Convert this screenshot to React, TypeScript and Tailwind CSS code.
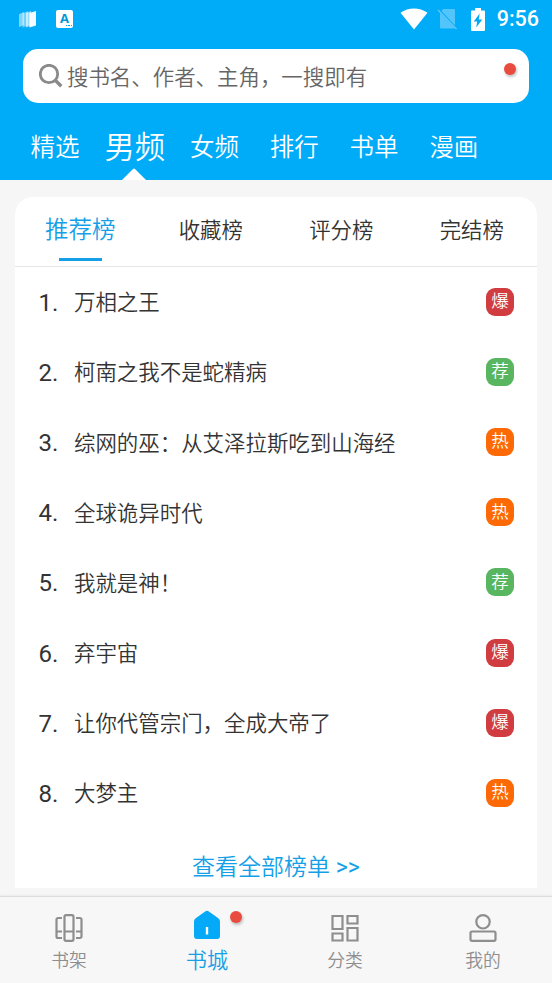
import React, { useState } from 'react';

type BadgeKind = '爆' | '荐' | '热';

interface Book {
  title: string;
  badge: BadgeKind;
}

const channels = ['精选', '男频', '女频', '排行', '书单', '漫画'];

const rankings = ['推荐榜', '收藏榜', '评分榜', '完结榜'];

const books: Book[] = [
  { title: '万相之王', badge: '爆' },
  { title: '柯南之我不是蛇精病', badge: '荐' },
  { title: '综网的巫：从艾泽拉斯吃到山海经', badge: '热' },
  { title: '全球诡异时代', badge: '热' },
  { title: '我就是神！', badge: '荐' },
  { title: '弃宇宙', badge: '爆' },
  { title: '让你代管宗门，全成大帝了', badge: '爆' },
  { title: '大梦主', badge: '热' },
];

const badgeColors: Record<BadgeKind, string> = {
  爆: 'bg-[#d03c3f]',
  荐: 'bg-[#58b560]',
  热: 'bg-[#fd6a05]',
};

const StatusBar: React.FC = () => (
  <div className="flex h-[38px] items-center justify-between pl-[19px] pr-[13px]">
    <div className="flex items-center gap-5">
      <svg width="17" height="18" viewBox="0 0 17 18" fill="#fff">
        <path d="M0 4.200 5 2v13L0 17z" opacity=".5" />
        <path d="M3.500 3.200 9 1.200v14.300l-5.500 2z" opacity=".45" />
        <path d="M7 3 12 1v14.500l-5 2z" opacity=".6" />
        <path d="M10.500 3 17 1v14.500l-6.500 2z" opacity=".95" />
      </svg>
      <div className="relative flex h-[18px] w-[17px] justify-center rounded-[2px] bg-white">
        <span className="font-['Open_Sans',sans-serif] text-[13px] font-bold leading-[17px] text-[#0795d8]">A</span>
        <span className="absolute bottom-[2px] right-[1px] flex gap-px">
          <i className="h-[1.500px] w-[1.500px] bg-[#00a9f7]" />
          <i className="h-[1.500px] w-[1.500px] bg-[#00a9f7]" />
          <i className="h-[1.500px] w-[1.500px] bg-[#00a9f7]" />
        </span>
      </div>
    </div>
    <div className="flex items-center">
      <svg width="28" height="22" viewBox="0 0 28 22" fill="#fff">
        <path d="M.5 4.800C8.300-1 19.700-1 27.500 4.800L14 21.500z" />
      </svg>
      <svg className="ml-[9px]" width="21" height="22" viewBox="0 0 21 22">
        <path d="M6 1H17a1 1 0 0 1 1 1v15.500L4.500 3zM3 5 18 20.500H4a1 1 0 0 1-1-1z" fill="#fff" opacity=".32" />
        <path d="m1 2 18.500 19" stroke="#8cd6f8" strokeWidth="1.200" opacity=".7" />
      </svg>
      <svg className="ml-[13px]" width="14" height="23" viewBox="0 0 14 23">
        <path d="M4 0h6v2.500h3a1 1 0 0 1 1 1V22a1 1 0 0 1-1 1H1a1 1 0 0 1-1-1V3.500a1 1 0 0 1 1-1h3z" fill="#fff" />
        <path d="M8.700 5.500 2.700 13.500h3.500L5.200 19.500 11.300 11.500H7.800z" fill="#00a9f7" />
      </svg>
      <span className="ml-3 text-[21.500px] font-medium leading-none text-white">9:56</span>
    </div>
  </div>
);

const SearchBox: React.FC = () => (
  <div className="mx-[23px] mt-[11px] flex h-[54px] items-start justify-between rounded-[15px] bg-white pl-4 pr-[13px]">
    <div className="flex h-full items-center gap-1">
      <svg width="24" height="24" viewBox="0 0 24 24" fill="none" stroke="#8a8a8a">
        <circle cx="10" cy="10" r="8.700" strokeWidth="2.800" />
        <path d="m16.500 16.500 5.800 5.800" strokeWidth="3.400" />
      </svg>
      <span className="pt-[3px] text-[21.440px] leading-none text-[#666]">搜书名、作者、主角，一搜即有</span>
    </div>
    <span className="mt-[14px] h-3 w-3 rounded-full bg-[#e94b3f] shadow-[1px_2px_3px_rgba(0,0,0,0.25)]" />
  </div>
);

const BookshelfIcon = () => (
  <svg width="28" height="28" viewBox="0 0 28 28" fill="none" stroke="#8e8e8e" strokeWidth="2.200">
    <rect x="9.500" y="1.200" width="9" height="25.600" rx="1.500" />
    <path d="M9.500 17.500h9M7 4H3a1.500 1.500 0 0 0-1.500 1.500v17A1.500 1.500 0 0 0 3 24h4M1.500 17.500H7M21 4h4a1.500 1.500 0 0 1 1.500 1.500v17A1.500 1.500 0 0 1 25 24h-4M21 17.500h5.500" />
  </svg>
);

const StoreIcon = () => (
  <svg width="28" height="32" viewBox="0 0 28 32">
    <path d="M12.500 1.200q1.500-1 3 0L25 8q2 1.400 2 3.500V26a3 3 0 0 1-3 3H4a3 3 0 0 1-3-3V11.500Q1 9.400 3 8z" fill="#04a9f8" />
    <path d="M14 17v7.500" stroke="#fff" strokeWidth="2.400" />
  </svg>
);

const CategoryIcon = () => (
  <svg width="28" height="28" viewBox="0 0 28 28" fill="none" stroke="#8e8e8e" strokeWidth="2.200">
    <path d="M1.500 2H11.500v13H1.500zM16.500 2h10v7.500h-10zM1.500 19.500H11.500V26.500H1.500zM16.500 14h10v12.500h-10z" />
  </svg>
);

const ProfileIcon = () => (
  <svg width="28" height="28" viewBox="0 0 28 28" fill="none" stroke="#8e8e8e" strokeWidth="2.200">
    <circle cx="14" cy="7.800" r="6.700" />
    <rect x="1.500" y="17.500" width="25" height="9.300" rx="1.500" />
  </svg>
);

const navItems = [
  { label: '书架', Icon: BookshelfIcon },
  { label: '书城', Icon: StoreIcon, dot: true },
  { label: '分类', Icon: CategoryIcon },
  { label: '我的', Icon: ProfileIcon },
];

const App: React.FC = () => {
  const [channel, setChannel] = useState('男频');
  const [ranking, setRanking] = useState('推荐榜');
  const [page, setPage] = useState('书城');

  return (
    <div className="flex h-[983px] w-[552px] flex-col overflow-hidden bg-[#f6f6f6] font-[Roboto,'Noto_Sans_CJK_SC',sans-serif] font-[350]">
      <header className="h-[180px] shrink-0 bg-[#00abf8]">
        <StatusBar />
        <SearchBox />
        <nav className="flex h-[77px] pl-[15px]">
          {channels.map((name) => (
            <button
              key={name}
              onClick={() => setChannel(name)}
              className={`relative flex w-[79.800px] items-center justify-center whitespace-nowrap pt-[13px] leading-none text-white ${
                channel === name ? 'text-[30.300px]' : 'text-[24.500px]'
              }`}
            >
              {name}
              {channel === name && (
                <svg className="absolute bottom-0 left-[27px]" width="24" height="12" viewBox="0 0 24 12">
                  <path d="M0 12 11 1q1-1 2 0l11 11z" fill="#fff" />
                </svg>
              )}
            </button>
          ))}
        </nav>
      </header>

      <main className="mx-[15px] mt-[17px] h-[691px] shrink-0 rounded-t-[18px] bg-white">
        <div className="flex h-[70px] border-b border-[#e6e6e6]">
          {rankings.map((name) => (
            <button
              key={name}
              onClick={() => setRanking(name)}
              className={`flex flex-1 flex-col items-center leading-none ${
                ranking === name ? 'text-[23.500px] text-[#149fe6]' : 'text-[21.400px] text-[#333]'
              }`}
            >
              <span className="flex h-[61px] items-center pt-1.5">{name}</span>
              {ranking === name && <span className="h-[3px] w-[43px] bg-[#149fe6]" />}
            </button>
          ))}
        </div>

        <ol>
          {books.map((book, i) => (
            <li key={book.title} className="flex h-[70.100px] items-center pl-[23.500px] pr-[23px] text-[#333]">
              <span className="w-[35.500px] pt-[2px] text-[24px] font-normal leading-none">{i + 1}.</span>
              <span className="flex-1 pt-[2px] text-[21.440px] leading-none">{book.title}</span>
              <span className={`flex h-7 w-7 items-center justify-center rounded-[9px] text-[17.500px] leading-none text-white ${badgeColors[book.badge]}`}>
                {book.badge}
              </span>
            </li>
          ))}
        </ol>

        <button className="mt-[9px] flex h-[50px] w-full items-center justify-center whitespace-pre pt-[11px] text-[23px] leading-none text-[#149fe6]">
          查看全部榜单<span className="font-normal"> &gt;&gt;</span>
        </button>
      </main>

      <nav className="mt-2 flex h-[87px] shrink-0 border-t border-[#dcdcdc] bg-[#f7f7f7] shadow-[0_-1px_2px_rgba(0,0,0,0.05)]">
        {navItems.map(({ label, Icon, dot }) => (
          <button
            key={label}
            onClick={() => setPage(label)}
            className="relative flex flex-1 flex-col items-center leading-none"
          >
            <span className="flex h-[46px] items-end pb-[1px]">
              <Icon />
            </span>
            <span
              className={`flex h-[34px] items-center pt-[2px] ${
                page === label ? 'text-[21.200px] text-[#149fe6]' : 'text-[17.800px] text-[#8e8e8e]'
              }`}
            >
              {label}
            </span>
            {dot && <span className="absolute left-[92px] top-[14px] h-3 w-3 rounded-full bg-[#e94b3f] shadow-[1px_2px_3px_rgba(0,0,0,0.25)]" />}
          </button>
        ))}
      </nav>
    </div>
  );
};

export default App;
